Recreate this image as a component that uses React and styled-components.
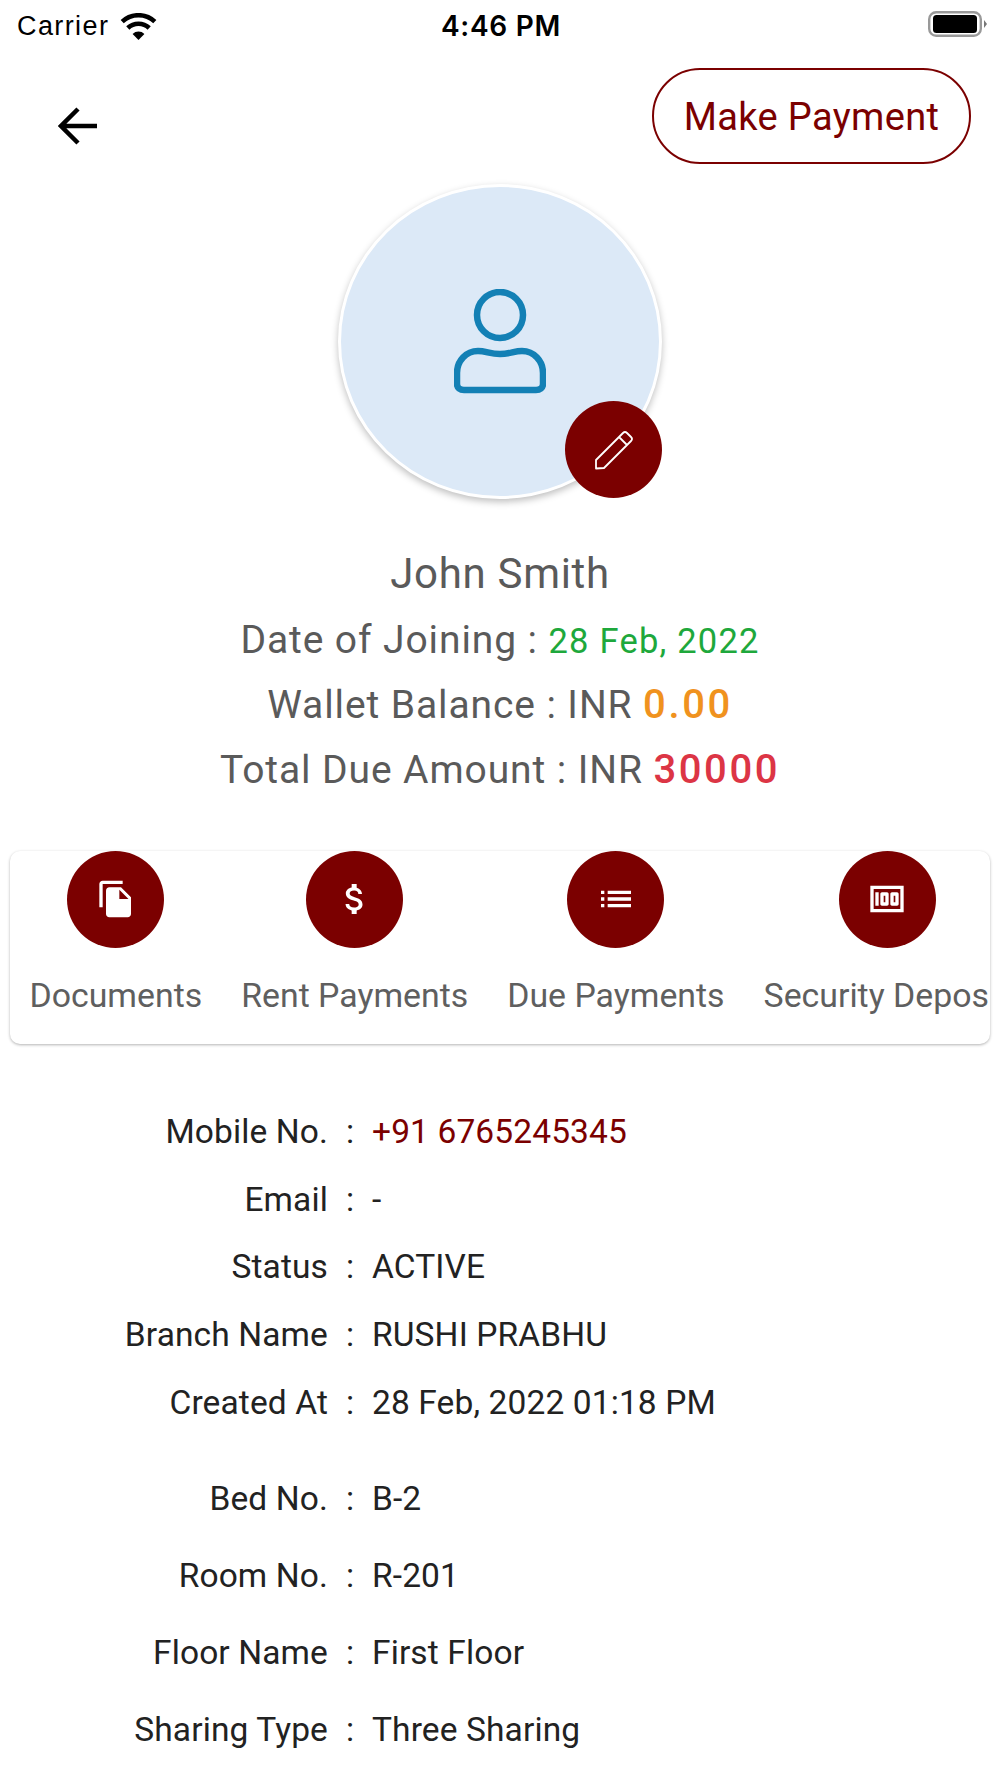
import React from "react";
import styled, { createGlobalStyle } from "styled-components";
import { MdFileCopy, MdAttachMoney, MdList, MdMoney } from "react-icons/md";

const Global = createGlobalStyle`
  html, body { margin: 0; padding: 0; background: #fff; }
  body { font-family: Roboto, "Liberation Sans", sans-serif; }
`;
const Page = styled.div`
  width: 1000px; height: 1778px; overflow: hidden; background: #fff;
  display: flex; flex-direction: column;
`;
const StatusBar = styled.div`
  height: 52px; display: grid; grid-template-columns: 1fr auto 1fr; align-items: center;
  padding: 0 13px 0 17px; color: #000; font-family: Inter, sans-serif;
`;
const StatusLeft = styled.div`
  display: flex; align-items: center; gap: 11px; font-size: 27px; letter-spacing: 1.4px;
  font-family: "Liberation Sans", sans-serif;
`;
const Clock = styled.div`font-size: 28px; font-weight: 600; letter-spacing: .7px; padding-right: 2px;`;
const StatusRight = styled.div`display: flex; justify-content: flex-end; padding-bottom: 4px;`;
const Header = styled.div`
  display: flex; justify-content: space-between; align-items: flex-start;
  padding: 16px 29px 0 58px;
`;
const BackButton = styled.div`display: flex; padding-top: 39px;`;
const PayButton = styled.div`
  width: 319px; height: 96px; box-sizing: border-box; border: 2px solid #7b0000; border-radius: 48px;
  display: flex; align-items: center; justify-content: center;
  color: #7b0000; font-size: 38px; letter-spacing: .35px; padding-top: 2px;
`;
const AvatarWrap = styled.div`
  align-self: center; position: relative; width: 324px; height: 315px; margin-top: 20px;
`;
const Avatar = styled.div`
  width: 100%; height: 100%; box-sizing: border-box; border-radius: 50%; background: #dce9f7;
  border: 3px solid #fff; box-shadow: 0 3px 7px rgba(0,0,0,.25);
  display: flex; align-items: center; justify-content: center;
`;
const EditBadge = styled.div`
  position: absolute; right: 0; bottom: 1px; width: 97px; height: 97px; border-radius: 50%;
  background: #7b0000; display: flex; align-items: center; justify-content: center;
`;
const Info = styled.div`
  display: flex; flex-direction: column; align-items: center; margin-top: 41px; color: #5a5a5a;
`;
const Name = styled.div`font-size: 42px; line-height: 68px; letter-spacing: .7px;`;
const InfoLine = styled.div`
  font-size: 39px; line-height: 65px; letter-spacing: .9px; white-space: nowrap;
`;
const Amount = styled.span`
  color: ${p => p.$color}; font-size: ${p => p.$size}px; font-weight: ${p => p.$weight};
  letter-spacing: ${p => p.$spacing}px; line-height: 1;
`;
const Card = styled.div`
  margin: 47.5px 10px 0; height: 193px; border-radius: 10px; background: #fff; overflow: hidden;
  box-shadow: 0 1px 3px rgba(0,0,0,.3); display: flex; padding-left: 19.5px;
`;
const Action = styled.div`
  flex: none; width: ${p => p.$width ? p.$width + "px" : "auto"};
  display: flex; flex-direction: column; align-items: center; margin-right: 39px;
`;
const ActionCircle = styled.div`
  width: 97px; height: 97px; border-radius: 50%; background: #7b0000; color: #fff;
  display: flex; align-items: center; justify-content: center;
`;
const ActionLabel = styled.div`
  align-self: ${p => p.$clipped ? "flex-start" : "center"};
  margin-top: 26px; font-size: 33.85px; line-height: 44px; color: #5f5f5f; white-space: nowrap;
`;
const Details = styled.div`display: flex; flex-direction: column; margin-top: ${p => p.$top}px;`;
const Row = styled.div`
  height: ${p => p.$h}px; display: grid; grid-template-columns: 328px 44px 1fr; align-items: center;
  font-size: 33.5px; color: #222; letter-spacing: .12px; white-space: nowrap;
`;
const Label = styled.div`text-align: right;`;
const Colon = styled.div`text-align: center;`;
const Value = styled.div`color: ${p => p.$color || "#222"};`;

const Wifi = () => (
  <svg width="37" height="27" viewBox="0 0 37 27">
    <path d="M18.5 27 L12.6 21 A8.5 8.5 0 0 1 24.4 21 Z" fill="#000" />
    <path d="M7.8 15 A15.5 15.5 0 0 1 29.2 15" fill="none" stroke="#000" strokeWidth="4.6" />
    <path d="M2.2 8.6 A24 24 0 0 1 34.8 8.6" fill="none" stroke="#000" strokeWidth="4.6" />
  </svg>
);
const Battery = () => (
  <svg width="59" height="28" viewBox="0 0 59 28">
    <rect x="1.2" y="2.2" width="51.6" height="23.6" rx="7" fill="none" stroke="#999" strokeWidth="2.4" />
    <rect x="5" y="5" width="44" height="18" rx="3.5" fill="#000" />
    <path d="M56 10 L59 14 L56 18 Z" fill="#777" />
  </svg>
);
const Back = () => (
  <svg width="39" height="38" viewBox="0 0 39 38">
    <path d="M20 2 L3 19 L20 36 M3 19 H39" fill="none" stroke="#000" strokeWidth="4.5" />
  </svg>
);
const Person = () => (
  <svg width="92" height="106" viewBox="0 0 92 106">
    <circle cx="46" cy="26" r="23" fill="none" stroke="#1380b5" strokeWidth="6.5" />
    <path d="M24 62 C32 62 36 65 46 65 C56 65 60 62 68 62 C80 62 89 72 89 84 V95 C89 99 86 101 82 101 H10 C6 101 3 99 3 95 V84 C3 72 12 62 24 62 Z" fill="none" stroke="#1380b5" strokeWidth="6.5" />
  </svg>
);
const Pencil = () => (
  <svg width="40" height="40" viewBox="0 0 40 40">
    <path d="M2 30 L29 3 Q31 1 33 3 L37 7 Q39 9 37 11 L10 38 L2 38.5 Z M25 7 L33 15" fill="none" stroke="#fff" strokeWidth="1.8" strokeLinejoin="round" />
  </svg>
);

const actions = [
  { label: "Documents", icon: <MdFileCopy size={40} /> },
  { label: "Rent Payments", icon: <MdAttachMoney size={40} /> },
  { label: "Due Payments", icon: <MdList size={40} /> },
  { label: "Security Depos", icon: <MdMoney size={40} />, width: 247 },
];
const personal = [
  ["Mobile No.", "+91 6765245345", "#7b0000"],
  ["Email", "-"],
  ["Status", "ACTIVE"],
  ["Branch Name", "RUSHI PRABHU"],
  ["Created At", "28 Feb, 2022 01:18 PM"],
];
const room = [
  ["Bed No.", "B-2"],
  ["Room No.", "R-201"],
  ["Floor Name", "First Floor"],
  ["Sharing Type", "Three Sharing"],
];

export default function App() {
  return (
    <Page>
      <Global />
      <StatusBar>
        <StatusLeft>Carrier <Wifi /></StatusLeft>
        <Clock>4:46 PM</Clock>
        <StatusRight><Battery /></StatusRight>
      </StatusBar>
      <Header>
        <BackButton><Back /></BackButton>
        <PayButton>Make Payment</PayButton>
      </Header>
      <AvatarWrap>
        <Avatar><Person /></Avatar>
        <EditBadge><Pencil /></EditBadge>
      </AvatarWrap>
      <Info>
        <Name>John Smith</Name>
        <InfoLine>Date of Joining : <Amount $color="#1ea83c" $size={34.5} $weight={400} $spacing={1.2}>28 Feb, 2022</Amount></InfoLine>
        <InfoLine>Wallet Balance : INR <Amount $color="#f0921e" $size={40} $weight={500} $spacing={2.6}>0.00</Amount></InfoLine>
        <InfoLine>Total Due Amount : INR <Amount $color="#dc3545" $size={40} $weight={500} $spacing={2.6}>30000</Amount></InfoLine>
      </Info>
      <Card>
        {actions.map(a => (
          <Action key={a.label} $width={a.width}>
            <ActionCircle>{a.icon}</ActionCircle>
            <ActionLabel $clipped={!!a.width}>{a.label}</ActionLabel>
          </Action>
        ))}
      </Card>
      <Details $top={54}>
        {personal.map(([l, v, c]) => (
          <Row key={l} $h={67.7}><Label>{l}</Label><Colon>:</Colon><Value $color={c}>{v}</Value></Row>
        ))}
      </Details>
      <Details $top={24}>
        {room.map(([l, v]) => (
          <Row key={l} $h={77}><Label>{l}</Label><Colon>:</Colon><Value>{v}</Value></Row>
        ))}
      </Details>
    </Page>
  );
}
